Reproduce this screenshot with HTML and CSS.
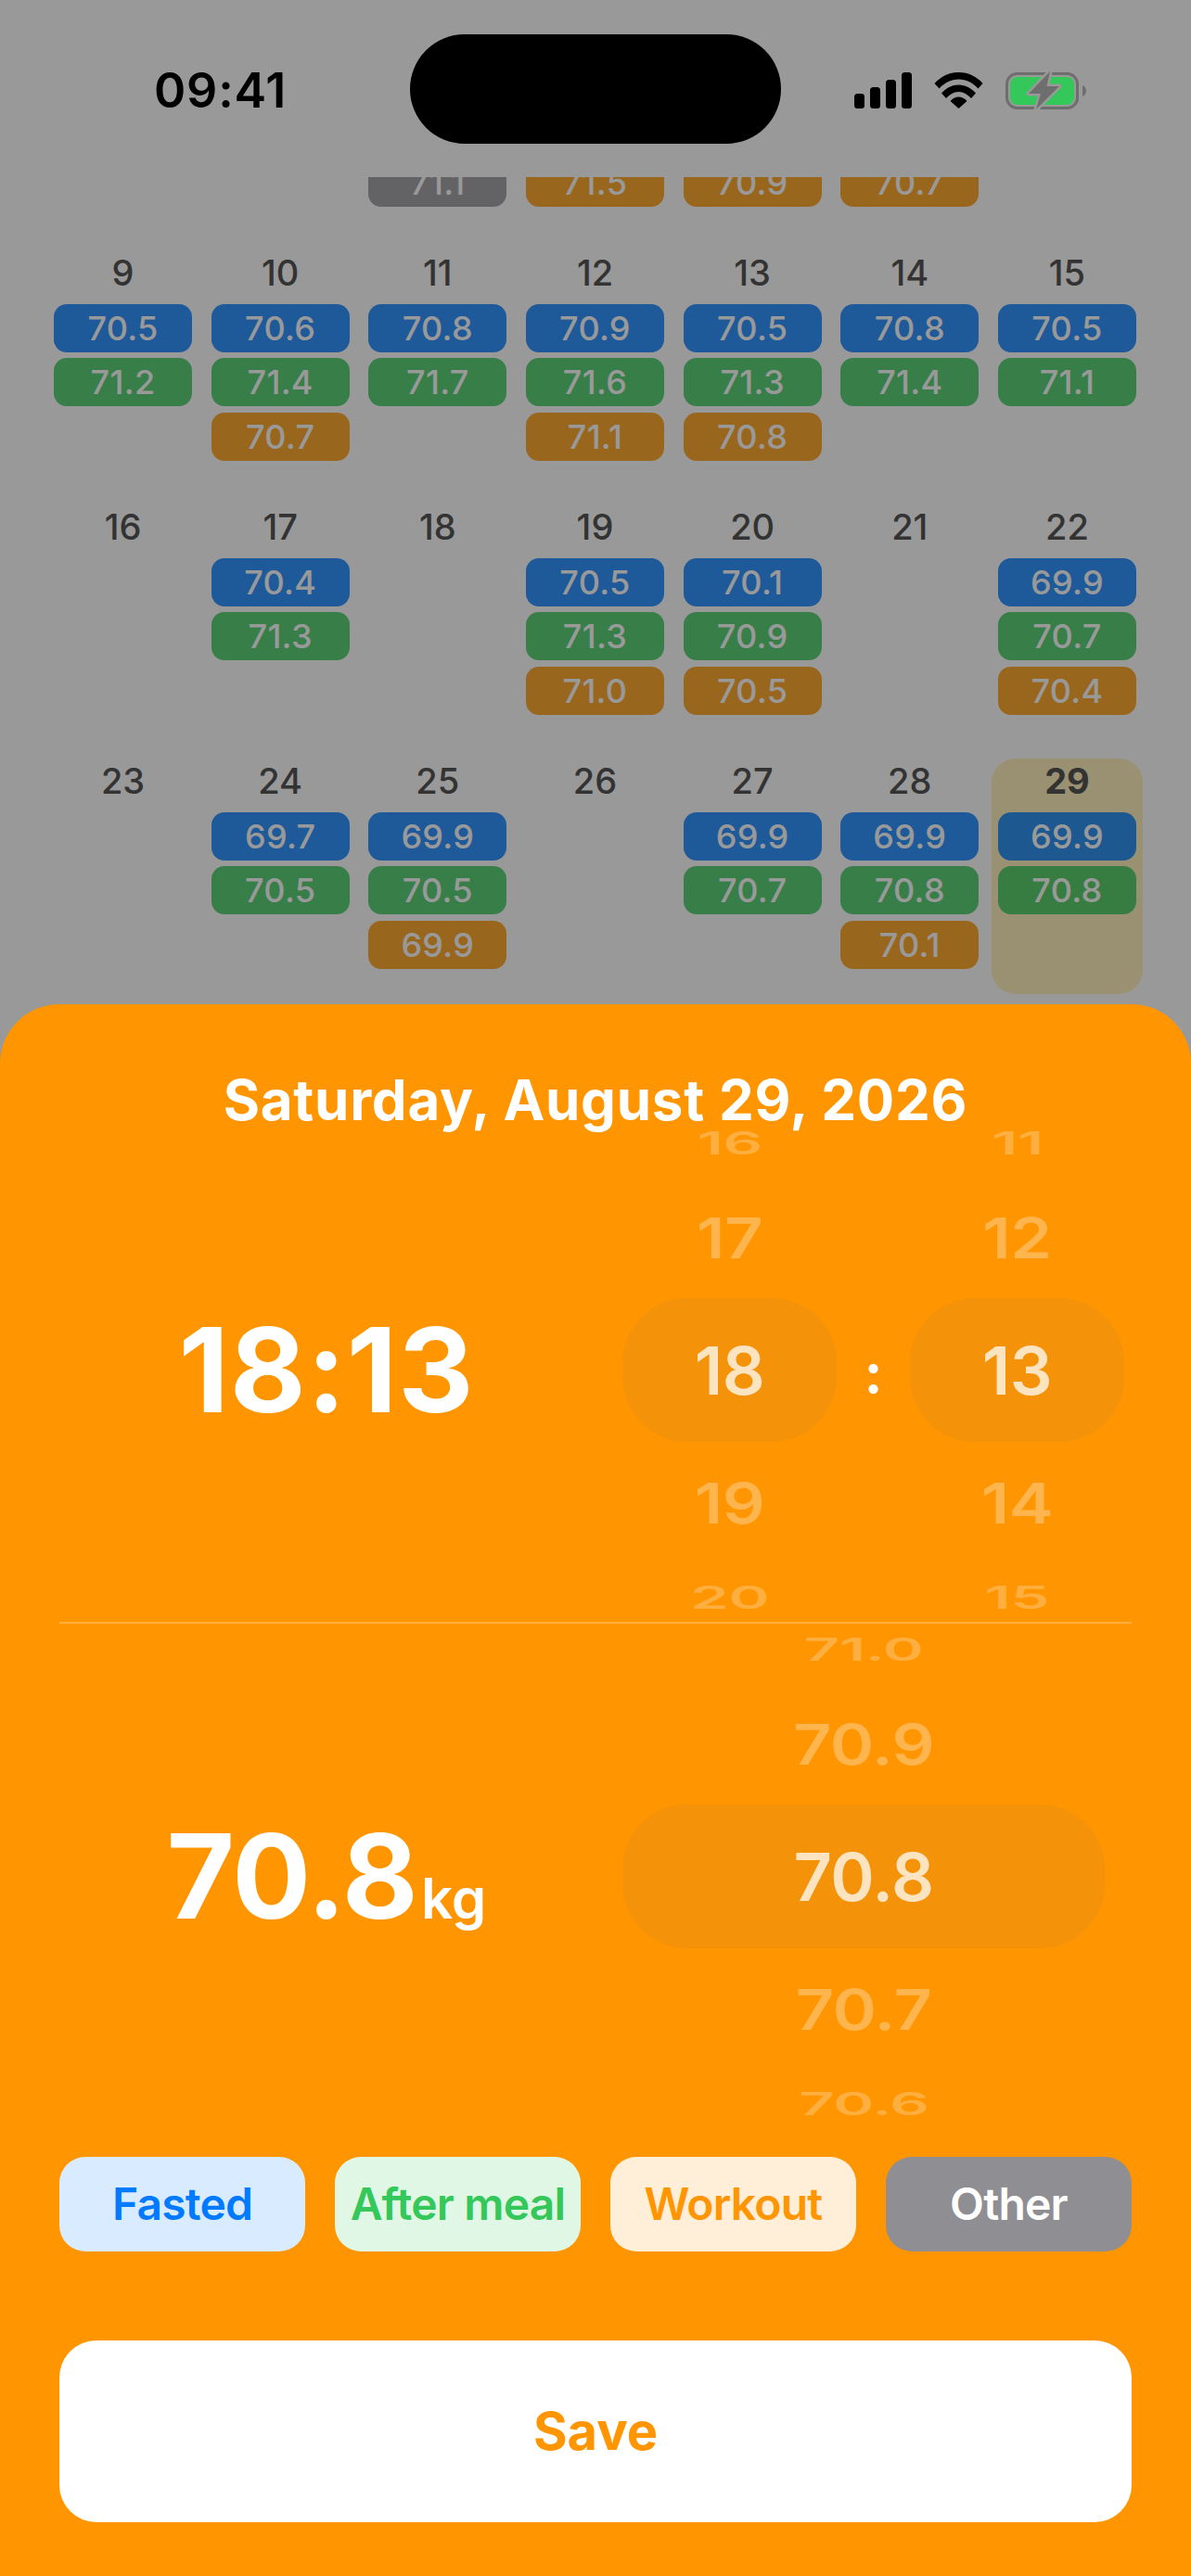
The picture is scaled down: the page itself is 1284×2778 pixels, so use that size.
FILE: index.html
```html
<!DOCTYPE html>
<html>
<head>
  <meta charset="utf-8">
  <title>Weight log</title>
  <link rel="stylesheet" href="styles.css">
</head>
<body>
<div class="screen">

  <div class="status-bar">
    <div class="status-time">09:41</div>
    <div class="island"></div>
    <svg class="icon-signal" width="62" height="39" viewBox="0 0 62 39">
      <rect x="0" y="23" width="11" height="16" rx="3.5"/>
      <rect x="17" y="16" width="11" height="23" rx="3.5"/>
      <rect x="34" y="8" width="11" height="31" rx="3.5"/>
      <rect x="51" y="0" width="11" height="39" rx="3.5"/>
    </svg>
    <svg class="icon-wifi" width="53" height="39" viewBox="0 0 53 39">
      <path d="M0.5 12C7 4.5 16 0 26.5 0C37 0 46 4.5 52.5 12L47.5 17.5C41.5 11 34.5 7.5 26.5 7.5C18.5 7.5 11.5 11 5.5 17.5Z"/>
      <path d="M8 22.5C13 17 19 13.5 26.5 13.5C34 13.5 40 17 45 22.5L40 28C36 24 32 21 26.5 21C21 21 17 24 13 28Z"/>
      <path d="M17.5 31C20 28 23 26.5 26.5 26.5C30 26.5 33 28 35.5 31L26.5 39Z"/>
    </svg>
    <svg class="icon-battery" width="88" height="44" viewBox="0 0 88 44">
      <rect x="1.5" y="3.5" width="76" height="37" rx="11" fill="none" stroke="#6e6e6e" stroke-width="3"/>
      <rect x="5" y="7" width="69" height="30" rx="8" fill="#34c759"/>
      <path d="M83 16C85.500 17 87 19 87 22C87 25 85.500 27 83 28Z" fill="#6e6e6e"/>
      <path d="M48 1L25 25H38L33 42L58 17H44.500Z" fill="#6e6e6e" stroke="#999" stroke-width="5" stroke-linejoin="round" paint-order="stroke"/>
    </svg>
  </div>

  <div class="calendar">
    <div class="cal-grid">
      <div class="cell-cut"></div>
      <div class="cell-cut"></div>
      <div class="cell-cut"><div class="pill pill-other">71.1</div></div>
      <div class="cell-cut"><div class="pill pill-workout">71.5</div></div>
      <div class="cell-cut"><div class="pill pill-workout">70.9</div></div>
      <div class="cell-cut"><div class="pill pill-workout">70.7</div></div>
      <div class="cell-cut"></div>

      <div class="cell"><div class="day">9</div><div class="pill pill-fasted">70.5</div><div class="pill pill-meal">71.2</div></div>
      <div class="cell"><div class="day">10</div><div class="pill pill-fasted">70.6</div><div class="pill pill-meal">71.4</div><div class="pill pill-workout">70.7</div></div>
      <div class="cell"><div class="day">11</div><div class="pill pill-fasted">70.8</div><div class="pill pill-meal">71.7</div></div>
      <div class="cell"><div class="day">12</div><div class="pill pill-fasted">70.9</div><div class="pill pill-meal">71.6</div><div class="pill pill-workout">71.1</div></div>
      <div class="cell"><div class="day">13</div><div class="pill pill-fasted">70.5</div><div class="pill pill-meal">71.3</div><div class="pill pill-workout">70.8</div></div>
      <div class="cell"><div class="day">14</div><div class="pill pill-fasted">70.8</div><div class="pill pill-meal">71.4</div></div>
      <div class="cell"><div class="day">15</div><div class="pill pill-fasted">70.5</div><div class="pill pill-meal">71.1</div></div>

      <div class="cell"><div class="day">16</div></div>
      <div class="cell"><div class="day">17</div><div class="pill pill-fasted">70.4</div><div class="pill pill-meal">71.3</div></div>
      <div class="cell"><div class="day">18</div></div>
      <div class="cell"><div class="day">19</div><div class="pill pill-fasted">70.5</div><div class="pill pill-meal">71.3</div><div class="pill pill-workout">71.0</div></div>
      <div class="cell"><div class="day">20</div><div class="pill pill-fasted">70.1</div><div class="pill pill-meal">70.9</div><div class="pill pill-workout">70.5</div></div>
      <div class="cell"><div class="day">21</div></div>
      <div class="cell"><div class="day">22</div><div class="pill pill-fasted">69.9</div><div class="pill pill-meal">70.7</div><div class="pill pill-workout">70.4</div></div>

      <div class="cell"><div class="day">23</div></div>
      <div class="cell"><div class="day">24</div><div class="pill pill-fasted">69.7</div><div class="pill pill-meal">70.5</div></div>
      <div class="cell"><div class="day">25</div><div class="pill pill-fasted">69.9</div><div class="pill pill-meal">70.5</div><div class="pill pill-workout">69.9</div></div>
      <div class="cell"><div class="day">26</div></div>
      <div class="cell"><div class="day">27</div><div class="pill pill-fasted">69.9</div><div class="pill pill-meal">70.7</div></div>
      <div class="cell"><div class="day">28</div><div class="pill pill-fasted">69.9</div><div class="pill pill-meal">70.8</div><div class="pill pill-workout">70.1</div></div>
      <div class="cell cell-today"><div class="day">29</div><div class="pill pill-fasted">69.9</div><div class="pill pill-meal">70.8</div></div>
    </div>
  </div>

  <div class="dim"></div>

  <div class="sheet">
    <div class="sheet-date">Saturday, August 29, 2026</div>

    <div class="picker-row">
      <div class="big-value big-time">18:13</div>
      <div class="wheel wheel-time">
        <div class="wheel-item far"><span>16</span></div>
        <div class="wheel-item near"><span>17</span></div>
        <div class="wheel-item current"><span>18</span></div>
        <div class="wheel-item near"><span>19</span></div>
        <div class="wheel-item far"><span>20</span></div>
      </div>
      <div class="wheel-colon">:</div>
      <div class="wheel wheel-time">
        <div class="wheel-item far"><span>11</span></div>
        <div class="wheel-item near"><span>12</span></div>
        <div class="wheel-item current"><span>13</span></div>
        <div class="wheel-item near"><span>14</span></div>
        <div class="wheel-item far"><span>15</span></div>
      </div>
    </div>

    <div class="divider"></div>

    <div class="picker-row">
      <div class="big-value">70.8<span class="unit">kg</span></div>
      <div class="wheel wheel-weight">
        <div class="wheel-item far"><span>71.0</span></div>
        <div class="wheel-item near"><span>70.9</span></div>
        <div class="wheel-item current"><span>70.8</span></div>
        <div class="wheel-item near"><span>70.7</span></div>
        <div class="wheel-item far"><span>70.6</span></div>
      </div>
    </div>

    <div class="chips">
      <div class="chip chip-fasted">Fasted</div>
      <div class="chip chip-meal">After meal</div>
      <div class="chip chip-workout">Workout</div>
      <div class="chip chip-other">Other</div>
    </div>

    <div class="save-button">Save</div>
  </div>

</div>
</body>
</html>
```

FILE: styles.css
```css
html, body {
  margin: 0;
  padding: 0;
}
body {
  font-family: Inter, "Liberation Sans", sans-serif;
  background-color: #fff;
}
.screen {
  position: relative;
  width: 1284px;
  height: 2778px;
  overflow: hidden;
  background-color: #fff;
}

/* Status bar */
.status-bar {
  position: relative;
  z-index: 2;
  display: flex;
  align-items: center;
  box-sizing: border-box;
  height: 191px;
  padding: 37px 0 36px 0;
}
.status-time {
  width: 275px;
  margin-left: 166px;
  margin-right: 1px;
  margin-top: 2px;
  font-size: 52px;
  font-weight: 600;
  letter-spacing: 0.8px;
  color: #000;
}
.island {
  width: 400px;
  height: 118px;
  border-radius: 59px;
  background-color: #000;
}
.icon-signal {
  margin-left: 79px;
  margin-top: 3px;
}
.icon-wifi {
  margin-left: 24px;
  margin-top: 3px;
}
.icon-battery {
  margin-left: 24px;
  margin-top: 3px;
}

/* Calendar */
.calendar {
  height: 892px;
}
.cal-grid {
  display: grid;
  grid-template-columns: repeat(7, 163px);
  column-gap: 6.67px;
  row-gap: 20px;
  padding: 0 51px;
}
.cell, .cell-cut {
  display: flex;
  flex-direction: column;
  box-sizing: border-box;
  padding: 0 7px;
}
.cell {
  height: 254px;
  gap: 6.3px;
  border-radius: 26px;
}
.cell-cut {
  height: 59px;
  padding-bottom: 27px;
  justify-content: flex-end;
  overflow: hidden;
}
.cell-today {
  background-color: rgba(255, 204, 0, 0.25);
}
.day {
  height: 48px;
  margin-bottom: 3.7px;
  line-height: 48px;
  text-align: center;
  font-size: 38px;
  font-weight: 500;
  color: #555;
}
.cell-today .day {
  font-weight: 700;
}
.pill {
  flex-shrink: 0;
  height: 52px;
  line-height: 52px;
  border-radius: 14px;
  text-align: center;
  font-size: 36px;
  font-weight: 500;
  letter-spacing: 0.3px;
  color: #fff;
}
.pill-fasted {
  background-color: rgba(0, 122, 255, 0.8);
}
.pill-meal {
  background-color: rgba(52, 199, 89, 0.8);
}
.pill-workout {
  background-color: rgba(255, 149, 0, 0.8);
}
.pill-other {
  background-color: rgba(142, 142, 147, 0.8);
}

.dim {
  position: absolute;
  top: 0;
  left: 0;
  right: 0;
  bottom: 0;
  z-index: 1;
  background-color: rgba(0, 0, 0, 0.4);
}

/* Bottom sheet */
.sheet {
  position: relative;
  z-index: 2;
  box-sizing: border-box;
  height: 1695px;
  padding: 0 64px;
  border-radius: 64px 64px 0 0;
  background-color: #ff9500;
  color: #fff;
}
.sheet-date {
  box-sizing: border-box;
  height: 122px;
  padding-top: 75px;
  line-height: 56px;
  text-align: center;
  font-size: 60px;
  font-weight: 700;
  letter-spacing: 0.75px;
  white-space: nowrap;
}
.picker-row {
  display: flex;
  align-items: center;
  height: 544px;
}
.big-value {
  flex: 0 0 576px;
  margin-right: 31px;
  text-align: center;
  font-size: 126px;
  font-weight: 700;
  letter-spacing: -0.7px;
}
.big-time {
  letter-spacing: 1px;
}
.unit {
  margin-left: 4px;
  font-size: 60px;
  font-weight: 600;
  letter-spacing: 0;
}
.divider {
  height: 2px;
  background-color: rgba(255, 255, 255, 0.25);
}

/* Wheels */
.wheel {
  display: flex;
  flex-direction: column;
  justify-content: center;
  height: 544px;
  font-size: 72px;
  font-weight: 600;
  letter-spacing: -0.5px;
  text-align: center;
}
.wheel-time {
  width: 231px;
}
.wheel-weight {
  width: 520px;
}
.wheel-item {
  display: flex;
  flex-shrink: 0;
  align-items: center;
  justify-content: center;
}
.wheel-item span {
  display: block;
}
.far {
  height: 73px;
  color: rgba(255, 255, 255, 0.25);
}
.far span {
  transform: scale(0.93, 0.47);
}
.near {
  height: 131px;
  color: rgba(255, 255, 255, 0.3);
}
.near span {
  transform: scaleY(0.84);
}
.current {
  height: 155px;
  border-radius: 70px;
  background-color: rgba(118, 118, 128, 0.08);
  color: rgba(255, 255, 255, 0.75);
}
.wheel-colon {
  width: 79px;
  margin-top: 6px;
  text-align: center;
  font-size: 60px;
  font-weight: 700;
}

/* Meal type chips */
.chips {
  display: flex;
  gap: 32px;
  margin-top: 31px;
}
.chip {
  flex: 1;
  height: 102px;
  line-height: 102px;
  border-radius: 28px;
  text-align: center;
  font-size: 48px;
  font-weight: 600;
  letter-spacing: -0.8px;
}
.chip-fasted {
  background-color: #d9ebff;
  color: #007aff;
}
.chip-meal {
  background-color: #e1f7e6;
  color: #34c759;
}
.chip-workout {
  background-color: #ffefd9;
  color: #ff9500;
}
.chip-other {
  background-color: #8e8e93;
  color: #fff;
}

.save-button {
  height: 196px;
  margin-top: 96px;
  line-height: 196px;
  border-radius: 40px;
  background-color: #fff;
  color: #ff9500;
  text-align: center;
  font-size: 56px;
  font-weight: 700;
}
```
